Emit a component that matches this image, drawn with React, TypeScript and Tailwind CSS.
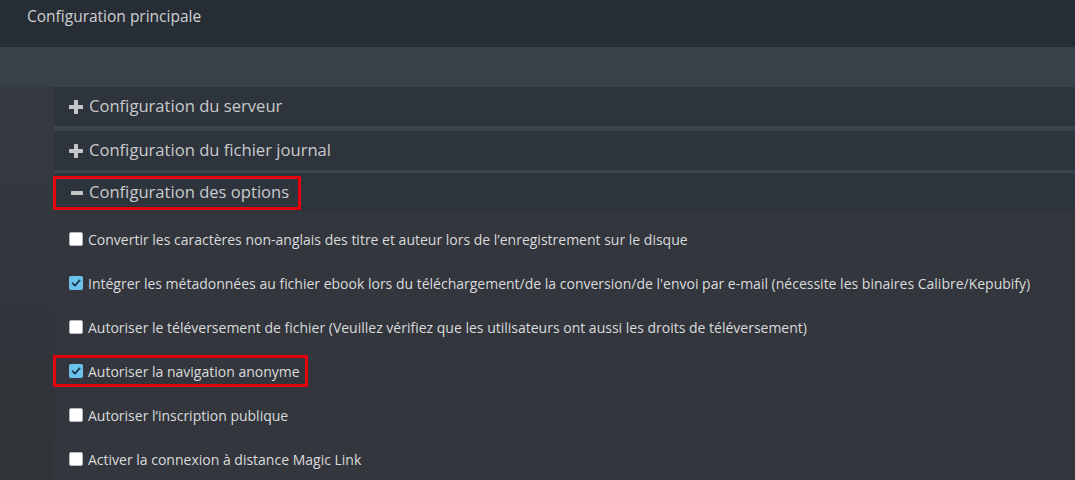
import React from "react";

type Option = { label: string; checked: boolean; highlight?: boolean };

const options: Option[] = [
  { label: "Convertir les caractères non-anglais des titre et auteur lors de l’enregistrement sur le disque", checked: false },
  {
    label:
      "Intégrer les métadonnées au fichier ebook lors du téléchargement/de la conversion/de l'envoi par e-mail (nécessite les binaires Calibre/Kepubify)",
    checked: true,
  },
  {
    label: "Autoriser le téléversement de fichier (Veuillez vérifiez que les utilisateurs ont aussi les droits de téléversement)",
    checked: false,
  },
  { label: "Autoriser la navigation anonyme", checked: true, highlight: true },
  { label: "Autoriser l’inscription publique", checked: false },
  { label: "Activer la connexion à distance Magic Link", checked: false },
];

const PlusIcon = () => (
  <svg width="14" height="14" viewBox="0 0 14 14" className="shrink-0">
    <rect x="5" y="0" width="4" height="14" rx="0.5" fill="#c4c6c8" />
    <rect x="0" y="5" width="14" height="4" rx="0.5" fill="#c4c6c8" />
  </svg>
);

const MinusIcon = () => (
  <svg width="12" height="14" viewBox="0 0 12 14" className="shrink-0">
    <rect x="0" y="5" width="12" height="4" rx="0.5" fill="#c4c6c8" />
  </svg>
);

const Checkbox = ({ checked }: { checked: boolean }) =>
  checked ? (
    <span className="w-[14px] h-[14px] rounded-[2px] bg-[#6cc3ec] flex items-center justify-center shrink-0">
      <svg width="10" height="10" viewBox="0 0 10 10">
        <path d="M1.5 5.2 L4 7.6 L8.6 2.4" stroke="#1e3a52" strokeWidth="1.8" fill="none" strokeLinecap="round" strokeLinejoin="round" />
      </svg>
    </span>
  ) : (
    <span className="w-[14px] h-[14px] rounded-[2px] bg-white border border-[#b4b8bc] shrink-0" />
  );

const PanelHeading = ({ title }: { title: string }) => (
  <div className="h-[39px] bg-[#2e343c] flex items-center gap-[6px] pl-[15px] text-[16.6px] text-[#c9cacc]">
    <PlusIcon />
    <span>{title}</span>
  </div>
);

export default function App() {
  return (
    <div className="w-[1075px] h-[480px] overflow-hidden bg-gradient-to-b from-[#363c44] to-[#303338] font-['Open_Sans',sans-serif]">
      <div className="h-[47px] bg-[#272d35] pl-[27px] pt-[5px] text-[15.5px] font-medium text-[#cfd0d2]">
        Configuration principale
      </div>
      <div className="h-[40px] bg-[#38404a]" />
      <div className="ml-[54px] flex flex-col">
        <PanelHeading title="Configuration du serveur" />
        <div className="h-[5px] bg-[#3a424b]" />
        <PanelHeading title="Configuration du fichier journal" />
        <div className="h-[3px] bg-[#3a424b]" />
        <div className="h-[39px] bg-[#2e343c] flex items-center">
          <div className="ml-[-1px] h-[34px] inline-flex items-center gap-[6px] border-[3px] border-[#e5000f] pl-[15px] pr-[9px] text-[16.6px] text-[#c9cacc]">
            <MinusIcon />
            <span>Configuration des options</span>
          </div>
        </div>
        <div className="bg-[#33363d] pt-[5px] flex flex-col text-[14px] text-[#dadbdc]">
          {options.map((o) => (
            <div key={o.label} className="h-[44px] flex items-center pl-[15px]">
              {o.highlight ? (
                <div className="ml-[-16px] h-[32px] inline-flex items-center gap-[5px] border-[3px] border-[#e5000f] pl-[13px] pr-[5px]">
                  <Checkbox checked={o.checked} />
                  <span>{o.label}</span>
                </div>
              ) : (
                <div className="flex items-center gap-[5px]">
                  <Checkbox checked={o.checked} />
                  <span>{o.label}</span>
                </div>
              )}
            </div>
          ))}
        </div>
      </div>
    </div>
  );
}
